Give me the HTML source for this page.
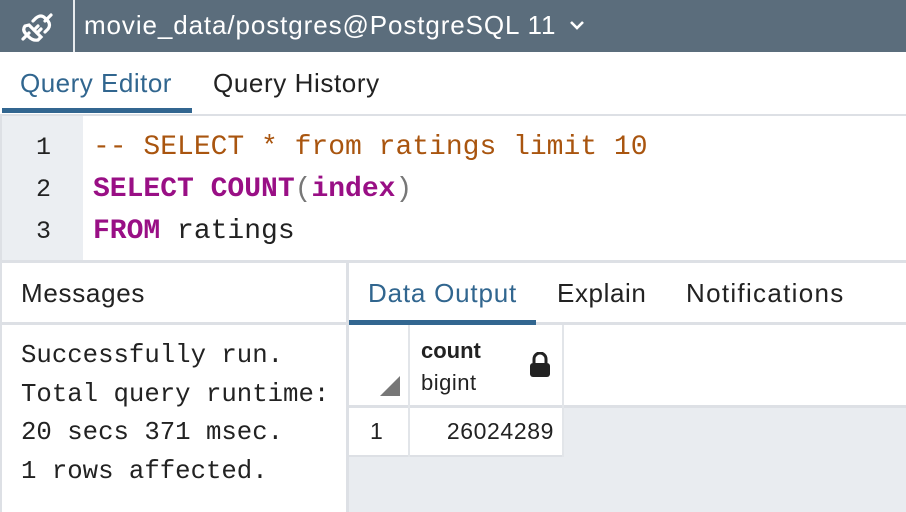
<!DOCTYPE html>
<html><head><style>
*{margin:0;padding:0;box-sizing:border-box}
body{width:906px;height:512px;overflow:hidden;background:#fff;font-family:"Liberation Sans",sans-serif;position:relative}
.a{position:absolute}
.mono{font-family:"Liberation Mono","DejaVu Sans Mono",monospace}
.t{letter-spacing:0.7px}
</style></head><body>
<div class="a" style="left:0;top:0;width:906px;height:52px;background:#5b6d7c"></div>
<div class="a" style="left:73px;top:0;width:2px;height:52px;background:#e8ebee"></div>
<svg class="a" style="left:20px;top:12px" width="34" height="30" viewBox="0 0 34 30" fill="none" stroke="#fff" stroke-width="3.2" stroke-linecap="round">
<path d="M3 27 L9 21"/><path d="M31 3 L25 9"/>
<path d="M9 13 L21 25 L18 28 Q13 29 9 25 L6 22 Q2 18 5 14 Z"/>
<path d="M13 9 L16 6 Q21 2 25 6 L28 9 Q31 13 28 17 L25 20"/>
<path d="M14 18 L18 14"/><path d="M17 21 L21 17"/>
</svg>
<div class="a" style="left:84px;top:10px;color:#fff;font-size:26px;letter-spacing:0.9px">movie_data/postgres@PostgreSQL 11</div>
<svg class="a" style="left:569px;top:19px" width="16" height="12" viewBox="0 0 16 12"><path d="M2 3 L8 9 L14 3" stroke="#fff" stroke-width="2.6" fill="none"/></svg>

<div class="a t" style="left:20px;top:68px;color:#31668f;font-size:26px;letter-spacing:0.5px">Query Editor</div>
<div class="a t" style="left:213px;top:68px;color:#222;font-size:26px;letter-spacing:0.6px">Query History</div>
<div class="a" style="left:2px;top:108px;width:190px;height:5px;background:#326690"></div>
<div class="a" style="left:0;top:114px;width:906px;height:2px;background:#dde0e5"></div>

<div class="a" style="left:0;top:116px;width:2px;height:146px;background:#dde0e5"></div>
<div class="a" style="left:2px;top:116px;width:81px;height:144px;background:#ebeef2"></div>
<div class="a mono" style="left:0;top:127px;width:51px;text-align:right;font-size:25px;line-height:42px;color:#222">1<br>2<br>3</div>
<div class="a mono" style="left:93px;top:127px;font-size:28px;line-height:42px;white-space:pre;color:#222"><span style="color:#a9550f">-- SELECT * from ratings limit 10</span>
<b style="color:#990f85">SELECT COUNT</b><span style="color:#777">(</span><b style="color:#990f85">index</b><span style="color:#777">)</span>
<b style="color:#990f85">FROM</b> ratings</div>
<div class="a" style="left:0;top:260px;width:906px;height:3px;background:#dde0e5"></div>

<div class="a" style="left:0;top:263px;width:2px;height:249px;background:#dde0e5"></div>
<div class="a t" style="left:21px;top:278px;color:#222;font-size:26px">Messages</div>
<div class="a" style="left:0;top:322px;width:346px;height:3px;background:#dde0e5"></div>
<div class="a" style="left:346px;top:263px;width:3px;height:249px;background:#dde0e5"></div>
<div class="a mono" style="left:21px;top:337px;font-size:25.7px;line-height:38.5px;color:#222;white-space:pre">Successfully run.
Total query runtime:
20 secs 371 msec.
1 rows affected.</div>

<div class="a" style="left:368px;top:278px;color:#31668f;font-size:26px;letter-spacing:0.8px">Data Output</div>
<div class="a" style="left:557px;top:278px;color:#222;font-size:26px;letter-spacing:0.6px">Explain</div>
<div class="a" style="left:686px;top:278px;color:#222;font-size:26px;letter-spacing:1.3px">Notifications</div>
<div class="a" style="left:349px;top:322px;width:557px;height:3px;background:#dde0e5"></div>
<div class="a" style="left:349px;top:320px;width:187px;height:5px;background:#326690"></div>

<div class="a" style="left:349px;top:325px;width:557px;height:187px;background:#e9ecf0"></div>
<div class="a" style="left:349px;top:325px;width:557px;height:80px;background:#fff"></div>
<div class="a" style="left:349px;top:405px;width:557px;height:3px;background:#dde0e5"></div>
<div class="a" style="left:349px;top:408px;width:215px;height:47px;background:#fff"></div>
<div class="a" style="left:349px;top:455px;width:215px;height:2px;background:#dde0e5"></div>
<div class="a" style="left:408px;top:325px;width:2px;height:132px;background:#e2e5e9"></div>
<div class="a" style="left:562px;top:325px;width:2px;height:132px;background:#e2e5e9"></div>
<svg class="a" style="left:380px;top:376px" width="20" height="20"><path d="M20 0 L20 20 L0 20 Z" fill="#777"/></svg>
<div class="a" style="left:421px;top:338px;font-weight:bold;font-size:22px;color:#222">count</div>
<div class="a" style="left:421px;top:370px;font-size:22px;color:#222;letter-spacing:0.5px">bigint</div>
<svg class="a" style="left:529px;top:352px" width="22" height="26" viewBox="0 0 22 26"><path d="M5 11 V7 A6 6 0 0 1 17 7 V11" stroke="#222" stroke-width="3" fill="none"/><rect x="1" y="11" width="20" height="14" rx="3" fill="#222"/></svg>
<div class="a" style="left:370px;top:418px;font-size:23px;color:#222">1</div>
<div class="a" style="left:410px;top:418px;width:144px;text-align:right;font-size:23px;color:#222;letter-spacing:0.6px">26024289</div>
</body></html>
